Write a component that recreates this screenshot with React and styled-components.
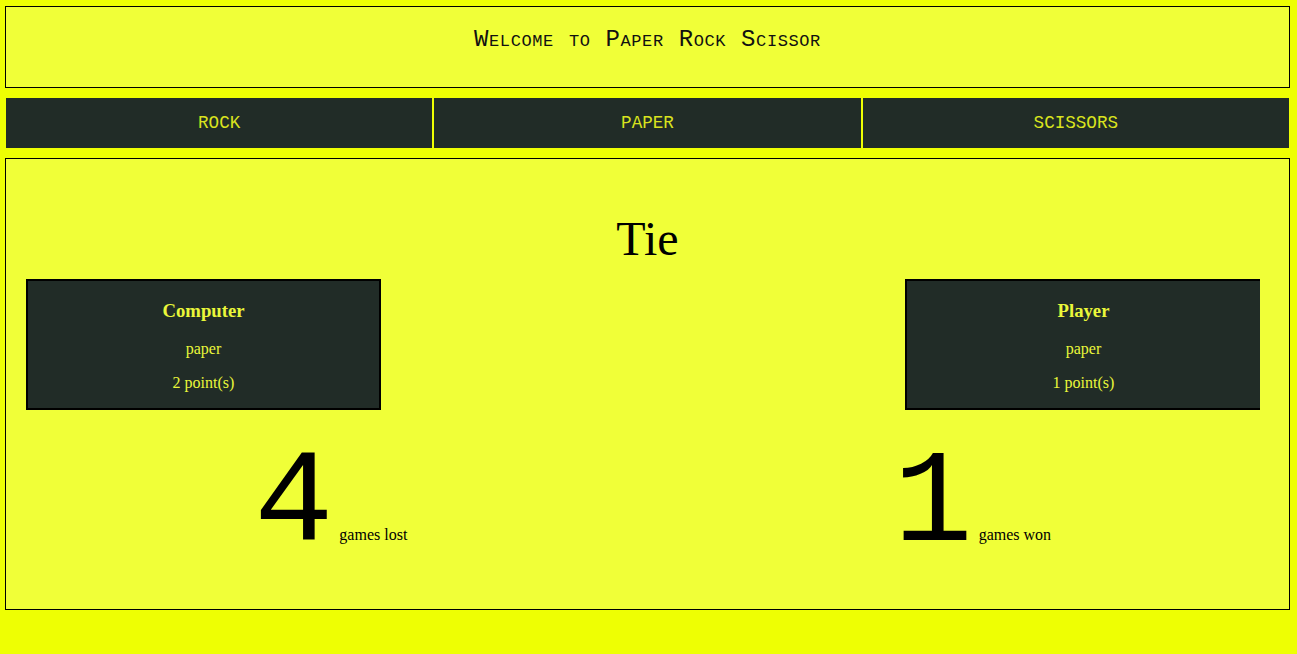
import React, { useState } from 'react';
import styled, { createGlobalStyle } from 'styled-components';

const GlobalStyle = createGlobalStyle`
  body {
    margin: 0;
    background: #eeff03;
    font-family: 'Liberation Serif', 'Times New Roman', serif;
  }
`;

const Page = styled.div`
  padding: 6px 7px 0 5px;
`;

const Header = styled.header`
  border: 1px solid #000;
  background: #f0ff38;
  padding: 19px 0 34px;
  text-align: center;
`;

const Title = styled.h1`
  margin: 0;
  font-family: 'Courier New', 'Liberation Mono', monospace;
  font-variant: small-caps;
  font-weight: normal;
  font-size: 24px;
  letter-spacing: 0.6px;
  color: #111;
`;

const Choices = styled.nav`
  display: flex;
  margin: 9px 0;
`;

const Choice = styled.button`
  flex: 1;
  height: 52px;
  border: 1px solid #eeff03;
  background: #212c27;
  color: #d9e31e;
  font-family: 'Courier New', 'Liberation Mono', monospace;
  font-size: 17.6px;
  cursor: pointer;
`;

const Board = styled.main`
  border: 1px solid #000;
  background: #f0ff38;
  padding: 52px 0 29px;
`;

const Result = styled.h2`
  margin: 0 0 13px;
  text-align: center;
  font-size: 48px;
  font-weight: normal;
  color: #000;
`;

const Cards = styled.div`
  display: flex;
  justify-content: space-between;
  padding: 0 29px 0 20px;
`;

const Card = styled.section`
  width: 355px;
  box-sizing: border-box;
  background: #212c27;
  border: 2px solid #000;
  border-right: ${(p) => (p.$open ? 'none' : '2px solid #000')};
  color: #eaf73a;
  text-align: center;
  font-size: 16px;

  h3 {
    margin: 18.7px 0;
    font-size: 18.7px;
  }

  p {
    margin: 16px 0;
  }
`;

const Scores = styled.div`
  display: flex;
  margin-top: 20px;
`;

const Score = styled.div`
  flex: 1;
  text-align: center;
  color: #000;
  font-size: 16px;
`;

const Big = styled.span`
  margin: 0 6px 0 8px;
  font-family: 'Courier New', 'Liberation Mono', monospace;
  font-size: 132px;
`;

export default function App() {
  const [state] = useState({
    result: 'Tie',
    computer: { choice: 'paper', points: 2 },
    player: { choice: 'paper', points: 1 },
    lost: 4,
    won: 1,
  });

  return (
    <Page>
      <GlobalStyle />
      <Header>
        <Title>Welcome to Paper Rock Scissor</Title>
      </Header>
      <Choices>
        <Choice>ROCK</Choice>
        <Choice>PAPER</Choice>
        <Choice>SCISSORS</Choice>
      </Choices>
      <Board>
        <Result>{state.result}</Result>
        <Cards>
          <Card>
            <h3>Computer</h3>
            <p>{state.computer.choice}</p>
            <p>{state.computer.points} point(s)</p>
          </Card>
          <Card $open>
            <h3>Player</h3>
            <p>{state.player.choice}</p>
            <p>{state.player.points} point(s)</p>
          </Card>
        </Cards>
        <Scores>
          <Score>
            <Big>{state.lost}</Big>games lost
          </Score>
          <Score>
            <Big>{state.won}</Big>games won
          </Score>
        </Scores>
      </Board>
    </Page>
  );
}
